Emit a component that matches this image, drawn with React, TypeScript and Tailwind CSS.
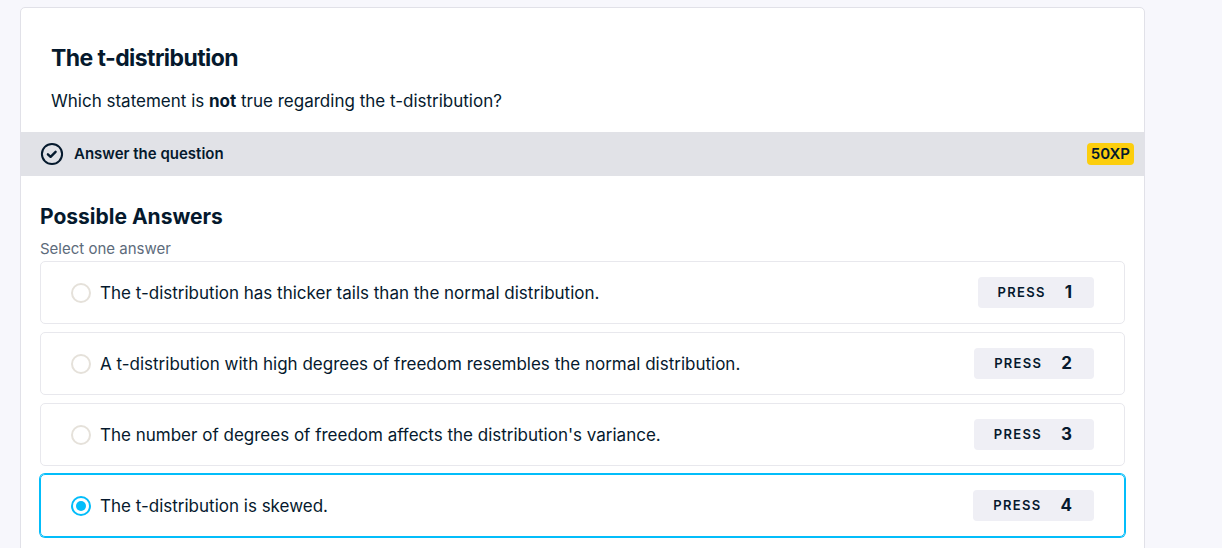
import { useState } from "react";

const answers = [
  "The t-distribution has thicker tails than the normal distribution.",
  "A t-distribution with high degrees of freedom resembles the normal distribution.",
  "The number of degrees of freedom affects the distribution's variance.",
  "The t-distribution is skewed.",
];

function CheckIcon() {
  return (
    <svg width="24" height="24" viewBox="0 0 24 24" fill="none" stroke="#05192d" aria-hidden="true">
      <circle cx="12" cy="12" r="10.1" strokeWidth="2" />
      <path d="M7.9 12.3l2.7 2.5 5-5" strokeWidth="2.4" strokeLinecap="round" strokeLinejoin="round" />
    </svg>
  );
}

type AnswerProps = {
  text: string;
  hotkey: number;
  checked: boolean;
  onSelect: () => void;
};

function Answer({ text, hotkey, checked, onSelect }: AnswerProps) {
  return (
    <label className="flex min-h-[63px] cursor-pointer items-center rounded-[5px] border border-[#e8e8ed] px-[30px] has-checked:border-[#03bdfa] has-checked:ring-1 has-checked:ring-[#03bdfa]">
      <input
        type="radio"
        name="answer"
        checked={checked}
        onChange={onSelect}
        className="grid size-5 shrink-0 appearance-none place-items-center rounded-full border-2 border-[#e5e1da] before:size-[10px] before:rounded-full checked:border-[#03bdfa] checked:before:bg-[#03bdfa]"
      />
      <span className="ml-[9px] grow text-[17px] leading-6">{text}</span>
      <span className="flex h-[31px] shrink-0 items-center gap-[19px] rounded bg-[#efeff5] pr-[22px] pl-5">
        <span className="text-[13px] font-semibold tracking-widest">PRESS</span>
        <kbd className="font-['Inter',sans-serif] text-[17px] font-bold">{hotkey}</kbd>
      </span>
    </label>
  );
}

export default function App() {
  const [selected, setSelected] = useState(3);
  return (
    <div className="min-h-screen overflow-hidden bg-[#f7f7fc] pt-[7px] pr-[77px] pl-5 font-['Inter','Liberation_Sans',sans-serif] text-[#05192d]">
      <main className="min-h-screen rounded-t-[5px] border border-[#e1e1e8] bg-white">
        <header className="px-[30px] pt-8 pb-[17px]">
          <h1 className="text-[23px] leading-9 font-bold tracking-tight">The t-distribution</h1>
          <p className="mt-[11px] text-[17px] leading-7">
            Which statement is <strong>not</strong> true regarding the t-distribution?
          </p>
        </header>
        <div className="flex h-11 items-center justify-between bg-[#e1e2e7] pr-[10px] pl-[19px]">
          <div className="flex items-center gap-[10px]">
            <CheckIcon />
            <h2 className="text-[15px] font-semibold">Answer the question</h2>
          </div>
          <span className="rounded bg-[#fcce0d] px-1 text-[15px] leading-[22px] font-semibold">50XP</span>
        </div>
        <fieldset aria-labelledby="answers-title" className="px-[19px] pt-[23px]">
          <h2 id="answers-title" className="text-[21px] leading-9 font-bold">Possible Answers</h2>
          <p className="mt-[2px] text-[15px] leading-6 text-[#5d6b7b]">Select one answer</p>
          <div className="flex flex-col gap-2">
            {answers.map((text, i) => (
              <Answer key={text} text={text} hotkey={i + 1} checked={selected === i} onSelect={() => setSelected(i)} />
            ))}
          </div>
        </fieldset>
      </main>
    </div>
  );
}
